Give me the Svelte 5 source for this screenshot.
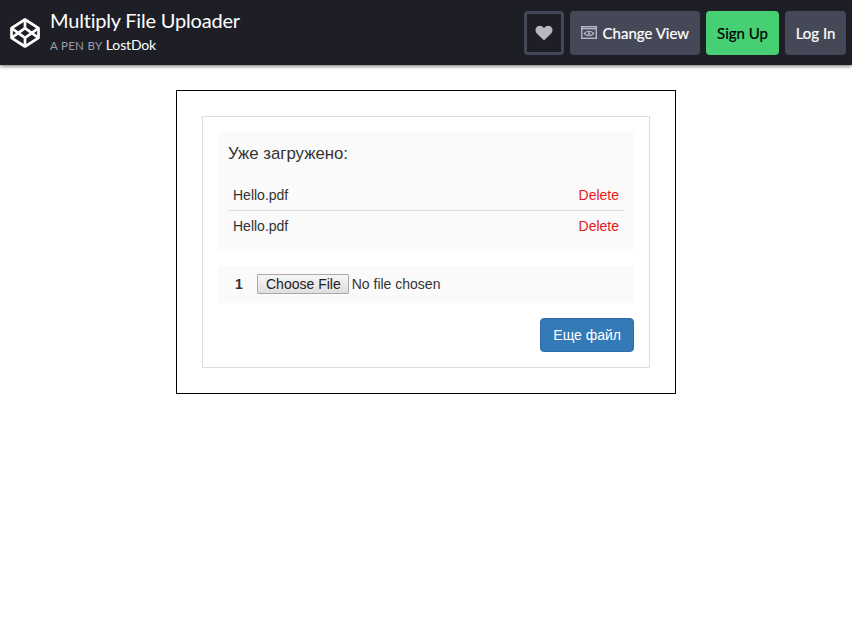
<script>
  const files = ['Hello.pdf', 'Hello.pdf'];
</script>

<header class="bar">
  <div class="brand">
    <svg class="logo" viewBox="0 0 32 32" width="32" height="32" fill="none" stroke="#fff" stroke-width="2.700" stroke-linejoin="round">
      <path d="M16 2.5 29.5 11.2V20.8L16 29.5 2.5 20.8V11.2Z" />
      <path d="M2.5 11.2 16 20.8 29.5 11.2M2.5 20.8 16 11.2 29.5 20.8M16 2.5V11.2M16 20.8V29.5" />
    </svg>
    <div class="titles">
      <h1>Multiply File Uploader</h1>
      <p><span class="by">A PEN BY</span> <span class="author">LostDok</span></p>
    </div>
  </div>
  <nav class="actions">
    <button class="btn heart" aria-label="Like">
      <svg viewBox="0 0 20 18" width="18" height="16" fill="#b6b6c4"><path d="M10 17.5 2 9.6C-.2 7.300 0 3.800 2.100 2 4.300.2 7.600.500 10 3.300 12.400.5 15.700.2 17.900 2c2.100 1.800 2.300 5.300.1 7.600Z" /></svg>
    </button>
    <button class="btn grey view">
      <svg viewBox="0 0 16 13" width="16" height="13" fill="none" stroke="#b6b6c4"><rect x=".7" y=".7" width="14.600" height="11.600" stroke-width="1.400" /><path d="M.7 2.600h14.600" stroke-width="1.600" /><path d="M3.200 7.500C4.700 5.900 6.400 5.200 8 5.200s3.300.7 4.800 2.300C11.300 9.100 9.600 9.800 8 9.800S4.700 9.100 3.200 7.500Z" stroke-width="1.100" /><circle cx="8" cy="7.500" r="1.200" fill="#b6b6c4" stroke="none" /></svg>
      Change View
    </button>
    <button class="btn green">Sign Up</button>
    <button class="btn grey login">Log In</button>
  </nav>
</header>

<main class="page">
  <section class="frame">
    <div class="panel">
      <div class="uploaded">
        <h2>Уже загружено:</h2>
        <ul>
          {#each files as file}
            <li><span>{file}</span><a href="#delete">Delete</a></li>
          {/each}
        </ul>
      </div>
      <div class="picker">
        <b>1</b>
        <input type="file" />
      </div>
      <div class="foot">
        <button class="more">Еще файл</button>
      </div>
    </div>
  </section>
</main>

<style>
  :global(body) {
    margin: 0;
    background: #fff;
    font-family: "Liberation Sans", Arial, sans-serif;
    font-size: 14px;
    color: #333;
  }
  .bar {
    height: 65px;
    box-sizing: border-box;
    background: #1e1f26;
    box-shadow: 0 1px 4px rgba(0, 0, 0, 0.6);
    display: flex;
    justify-content: space-between;
    align-items: center;
    padding: 0 6px 0 9px;
    font-family: Lato, sans-serif;
  }
  .brand {
    display: flex;
    align-items: center;
    gap: 9px;
  }
  .logo {
    display: block;
  }
  .titles {
    display: flex;
    flex-direction: column;
    gap: 5px;
    margin-top: -3px;
  }
  h1 {
    margin: 0;
    color: #fff;
    font-size: 20px;
    font-weight: 400;
    line-height: 24px;
    letter-spacing: -0.2px;
  }
  .titles p {
    margin: 0;
    font-size: 14px;
    line-height: 16px;
    letter-spacing: -0.15px;
  }
  .by {
    color: #9b9dad;
    font-size: 11.500px;
    letter-spacing: 0.3px;
  }
  .author {
    color: #fff;
  }
  .actions {
    display: flex;
    gap: 6px;
  }
  .btn {
    height: 44px;
    box-sizing: border-box;
    border: 0;
    border-radius: 4px;
    font-family: Lato, sans-serif;
    font-size: 15px;
    padding: 0 11px;
    display: flex;
    align-items: center;
    cursor: pointer;
    -webkit-text-stroke: 0.2px currentColor;
  }
  .heart {
    width: 40px;
    justify-content: center;
    background: #1e1f26;
    border: 3px solid #444857;
    padding: 0;
  }
  .grey {
    background: #444857;
    color: #fff;
  }
  .view {
    gap: 6px;
  }
  .login {
    width: 61px;
    padding: 0;
    justify-content: center;
  }
  .green {
    background: #47cf73;
    color: #000;
  }
  .page {
    padding-top: 25px;
    display: flex;
    justify-content: center;
  }
  .frame {
    width: 500px;
    box-sizing: border-box;
    border: 1px solid #000;
    padding: 25px;
  }
  .panel {
    border: 1px solid #ddd;
    padding: 15px;
  }
  .uploaded {
    background: #fafafa;
    padding: 10px;
  }
  h2 {
    margin: 0 0 15px;
    font-size: 16.800px;
    font-weight: 400;
    line-height: 23px;
    color: #333;
  }
  ul {
    list-style: none;
    margin: 0;
    padding: 0;
  }
  li {
    display: flex;
    justify-content: space-between;
    padding: 5px;
    line-height: 20px;
    height: 20px;
  }
  li + li {
    border-top: 1px solid #ddd;
  }
  a {
    color: #e81818;
    text-decoration: none;
  }
  .picker {
    margin-top: 15px;
    background: #fafafa;
    padding: 7px 18px 9px 17px;
    display: flex;
    align-items: center;
    gap: 15px;
    height: 37px;
    box-sizing: border-box;
  }
  .picker b {
    width: 7px;
  }
  .picker input {
    font-family: "Liberation Sans", Arial, sans-serif;
    font-size: 14px;
    color: #333;
  }
  .picker input::file-selector-button {
    background: linear-gradient(#f6f6f6, #dedede);
    border: 1px solid #a9a9a9;
    border-radius: 1px;
    color: #222;
    padding: 1px 7px 1px 8px;
    margin-right: 3px;
  }
  .foot {
    display: flex;
    justify-content: flex-end;
    margin-top: 15px;
  }
  .more {
    background: #337ab7;
    border: 1px solid #2e6da4;
    border-radius: 4px;
    color: #fff;
    font-family: "Liberation Sans", Arial, sans-serif;
    font-size: 14px;
    line-height: 20px;
    padding: 6px 12px;
    height: 34px;
    box-sizing: border-box;
  }
</style>
